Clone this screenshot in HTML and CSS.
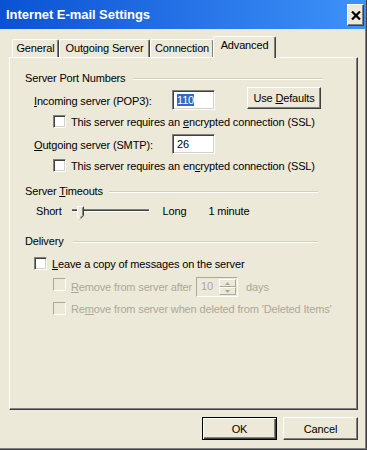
FILE: index.html
```html
<!DOCTYPE html>
<html lang="en">
<head>
    <meta charset="UTF-8">
    <title>Internet E-mail Settings</title>
    <link rel="stylesheet" href="styles.css">
</head>
<body>
    <div class="window">
        <div class="titlebar">
            <span class="title">Internet E-mail Settings</span>
            <button class="close">
                <svg width="10" height="9" viewBox="0 0 10 9">
                    <path d="M1 0.5l8 8M9 0.5l-8 8" stroke="#000" stroke-width="2.2" fill="none"/>
                </svg>
            </button>
        </div>

        <div class="tabs">
            <div class="tab tab-general">General</div>
            <div class="tab tab-outgoing">Outgoing Server</div>
            <div class="tab tab-connection">Connection</div>
            <div class="tab tab-advanced active">Advanced</div>
        </div>

        <div class="panel">
            <div class="group-title ports">
                <span>Server Port Numbers</span>
            </div>
            <div class="port-row">
                <label class="port-label"><u>I</u>ncoming server (POP3):</label>
                <div class="field"><span class="selected">110</span></div>
                <button class="btn defaults">Use <u>D</u>efaults</button>
            </div>
            <div class="check-row sub">
                <span class="checkbox"></span>
                <span>This server requires an <u>e</u>ncrypted connection (SSL)</span>
            </div>
            <div class="port-row outgoing">
                <label class="port-label"><u>O</u>utgoing server (SMTP):</label>
                <div class="field">26</div>
            </div>
            <div class="check-row sub">
                <span class="checkbox"></span>
                <span>This server requires an en<u>c</u>rypted connection (SSL)</span>
            </div>

            <div class="group-title timeouts">
                <span>Server <u>T</u>imeouts</span>
            </div>
            <div class="slider-row">
                <span class="short">Short</span>
                <svg class="slider" width="78" height="14" viewBox="0 0 78 14">
                    <rect x="0" y="3" width="78" height="1" fill="#808080"/>
                    <rect x="0" y="4" width="77" height="1" fill="#404040"/>
                    <rect x="0" y="5" width="78" height="1" fill="#fff"/>
                    <rect x="77" y="3" width="1" height="3" fill="#fff"/>
                    <path d="M5 0.5h7v9l-3.5 3.5l-3.5-3.5z" fill="#ece9d8"/>
                    <path d="M5 10V0h7" fill="none" stroke="#fff" stroke-width="1" transform="translate(0.5 0.5)"/>
                    <path d="M11.5 0.5v9.2l-3.5 3.5" fill="none" stroke="#404040" stroke-width="1"/>
                    <path d="M10.5 1.5v7.8l-2.5 2.5" fill="none" stroke="#808080" stroke-width="1"/>
                    <path d="M5.5 10l3 3" fill="none" stroke="#fff" stroke-width="1"/>
                </svg>
                <span class="long">Long</span>
                <span class="minutes">1 minute</span>
            </div>

            <div class="group-title delivery">
                <span>Delivery</span>
            </div>
            <div class="check-row leave">
                <span class="checkbox"></span>
                <span><u>L</u>eave a copy of messages on the server</span>
            </div>
            <div class="check-row sub remove-after disabled">
                <span class="checkbox"></span>
                <span><u>R</u>emove from server after</span>
                <div class="spinner">
                    <span class="spin-value">10</span>
                    <div class="spin-buttons">
                        <span class="spin-btn">
                            <svg width="5" height="3" viewBox="0 0 5 3"><path d="M2.5 0L5 3H0z" fill="#aca899"/></svg>
                        </span>
                        <span class="spin-btn">
                            <svg width="5" height="3" viewBox="0 0 5 3"><path d="M0 0h5L2.5 3z" fill="#aca899"/></svg>
                        </span>
                    </div>
                </div>
                <span class="days">days</span>
            </div>
            <div class="check-row sub remove-deleted disabled">
                <span class="checkbox"></span>
                <span>Re<u>m</u>ove from server when deleted from 'Deleted Items'</span>
            </div>
        </div>

        <div class="actions">
            <button class="btn default">OK</button>
            <button class="btn">Cancel</button>
        </div>
    </div>
</body>
</html>
```

FILE: styles.css
```css
* {
    box-sizing: border-box;
}
body {
    margin: 0;
    background-color: #ece9d8;
    font-family: "Liberation Sans", Arial, sans-serif;
    font-size: 11px;
    letter-spacing: -0.15px;
    color: #000;
}
u {
    text-decoration: underline;
    text-underline-offset: 1px;
}
.window {
    width: 367px;
    height: 450px;
    background-color: #ece9d8;
    border-right: 1px solid #404040;
    border-bottom: 1px solid #404040;
    box-shadow: inset -1px -1px #808080;
}
.titlebar {
    height: 29px;
    margin-right: 1px;
    display: flex;
    align-items: center;
    justify-content: space-between;
    padding: 0 1px 0 6px;
    background: linear-gradient(to right, #0a52d3, #2a78ea 60%, #3d92f8);
}
.title {
    color: #fff;
    font-weight: bold;
    font-size: 13px;
    letter-spacing: -0.05px;
}
.close {
    width: 17px;
    height: 22px;
    padding: 0;
    margin-top: 1px;
    display: flex;
    align-items: center;
    justify-content: center;
    background-color: #ece9d8;
    border: 1px solid;
    border-color: #fff #404040 #404040 #fff;
    box-shadow: inset -1px -1px #808080;
}
.tabs {
    display: flex;
    align-items: flex-end;
    height: 28px;
    padding-left: 12px;
}
.tab {
    height: 18px;
    line-height: 16px;
    text-align: center;
    border: 1px solid;
    border-color: #fff #404040 transparent #fff;
    border-bottom: none;
    box-shadow: inset -1px 0 #808080;
    border-radius: 2px 2px 0 0;
}
.tab-general { width: 47px; }
.tab-outgoing { width: 91px; }
.tab-connection { width: 64px; }
.tab.active {
    width: 63px;
    height: 22px;
    line-height: 16px;
    margin: 0 -2px -1px -1px;
    position: relative;
    z-index: 1;
    background-color: #ece9d8;
}
.panel {
    margin-left: 9px;
    width: 349px;
    height: 353px;
    padding-left: 15px;
    border: 1px solid;
    border-color: #fff #404040 #404040 #fff;
    box-shadow: inset -1px -1px #808080;
}
.group-title {
    display: flex;
    align-items: center;
    height: 14px;
    margin-top: 13px;
}
.group-title::after {
    content: "";
    flex: 1;
    height: 1px;
    margin-left: 8px;
    background-color: #d0d0bf;
    box-shadow: 0 1px #fff;
}
.group-title.ports { width: 298px; }
.group-title.timeouts { width: 293px; margin-top: 12px; }
.group-title.delivery { width: 293px; margin-top: 13px; }
.group-title.timeouts::after { margin-left: 6px; }
.group-title.delivery::after { margin-left: 9px; }
.port-row {
    display: flex;
    align-items: flex-end;
    height: 23px;
    margin-top: 2px;
    padding-left: 9px;
}
.port-row.outgoing {
    margin-top: 3px;
}
.port-label {
    width: 138px;
    line-height: 16px;
    margin-bottom: 1px;
}
.field {
    width: 43px;
    height: 20px;
    padding: 3px 0 0 4px;
    line-height: 13px;
    background-color: #fff;
    border: 1px solid;
    border-color: #808080 #fff #fff #808080;
    box-shadow: inset 1px 1px #404040, inset -1px -1px #d4d0c8;
}
.selected {
    background-color: #316ac5;
    color: #fff;
}
.btn {
    font-family: inherit;
    font-size: 11px;
    letter-spacing: -0.15px;
    color: #000;
    background-color: #ece9d8;
    border: 1px solid;
    border-color: #fff #404040 #404040 #fff;
    box-shadow: inset -1px -1px #808080;
    padding: 0;
}
.btn.defaults {
    align-self: flex-start;
    width: 74px;
    height: 22px;
    margin-left: 32px;
}
.check-row {
    display: flex;
    align-items: center;
    height: 13px;
    margin-top: 5px;
    white-space: nowrap;
}
.check-row.sub {
    padding-left: 28px;
}
.check-row.leave {
    padding-left: 9px;
    margin-top: 9px;
}
.checkbox {
    width: 13px;
    height: 13px;
    margin-right: 5px;
    flex-shrink: 0;
    background-color: #fff;
    border: 1px solid;
    border-color: #808080 #fff #fff #808080;
    box-shadow: inset 1px 1px #404040, inset -1px -1px #d4d0c8;
}
.disabled {
    color: #aca899;
}
.disabled .checkbox {
    background-color: #ece9d8;
    border-color: #aca899 #fff #fff #aca899;
    box-shadow: none;
}
.remove-after {
    height: 20px;
    margin-top: 7px;
}
.remove-after .checkbox {
    align-self: flex-start;
    margin-top: 1px;
}
.remove-deleted {
    margin-top: 5px;
}
.spinner {
    display: flex;
    width: 42px;
    height: 20px;
    margin-left: 4px;
    border: 1px solid;
    border-color: #aca899 #fff #fff #aca899;
    background-color: #ece9d8;
}
.spin-value {
    flex: 1;
    padding: 2px 0 0 4px;
}
.spin-buttons {
    display: flex;
    flex-direction: column;
    width: 17px;
    margin: 1px 1px 1px 0;
}
.spin-btn {
    flex: 1;
    display: flex;
    align-items: center;
    justify-content: center;
    border: 1px solid;
    border-color: #fff #aca899 #aca899 #fff;
}
.days {
    margin-left: 8px;
}
.slider-row {
    display: flex;
    align-items: center;
    height: 20px;
    margin-top: 3px;
    padding-left: 11px;
}
.slider {
    margin: 3px 0 0 10px;
}
.long {
    margin-left: 13px;
}
.minutes {
    margin-left: 22px;
}
.actions {
    display: flex;
    justify-content: flex-end;
    gap: 6px;
    width: 358px;
    margin-top: 7px;
}
.actions .btn {
    width: 75px;
    height: 23px;
}
.btn.default {
    border: 1px solid #000;
    box-shadow: inset 1px 1px #fff, inset -1px -1px #404040, inset -2px -2px #808080;
}
```
